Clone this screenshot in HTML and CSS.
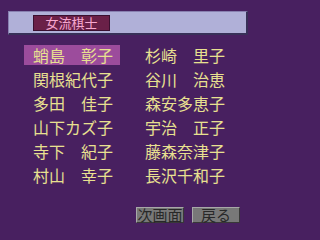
FILE: index.html
```html
<!DOCTYPE html>
<html lang="ja">
<head>
<meta charset="utf-8">
<link rel="stylesheet" href="styles.css">
</head>
<body>
<div class="screen">
  <div class="header">
    <div class="title">女流棋士</div>
  </div>
  <div class="list">
    <div class="name sel">蛸島　彰子</div>
    <div class="name">杉崎　里子</div>
    <div class="name">関根紀代子</div>
    <div class="name">谷川　治恵</div>
    <div class="name">多田　佳子</div>
    <div class="name">森安多恵子</div>
    <div class="name">山下カズ子</div>
    <div class="name">宇治　正子</div>
    <div class="name">寺下　紀子</div>
    <div class="name">藤森奈津子</div>
    <div class="name">村山　幸子</div>
    <div class="name">長沢千和子</div>
  </div>
  <div class="buttons">
    <div class="btn">次画面</div>
    <div class="btn">戻る</div>
  </div>
</div>
</body>
</html>
```
FILE: styles.css
```css
html, body {
  margin: 0;
  padding: 0;
  background: #482060;
}
.screen {
  width: 256px;
  height: 232px;
  overflow: hidden;
  background: #482060;
  font-family: "Noto Sans CJK JP", "Noto Sans", sans-serif;
  padding-top: 11px;
  box-sizing: border-box;
}
.header {
  margin: 0 8px;
  height: 24px;
  box-sizing: border-box;
  background: #b0b0d8;
  border-top: 1px solid #8880b0;
  border-left: 1px solid #8880b0;
  border-right: 2px solid #383058;
  border-bottom: 2px solid #383058;
  padding: 3px 0 0 24px;
}
.title {
  width: 77px;
  height: 16px;
  box-sizing: border-box;
  background: #6a2048;
  border: 1px solid #3a1030;
  color: #f8a8d0;
  font-size: 13px;
  line-height: 14px;
  text-align: center;
}
.list {
  display: grid;
  grid-template-columns: 96px 96px;
  column-gap: 16px;
  row-gap: 4px;
  margin: 10px 0 0 24px;
}
.name {
  height: 20px;
  box-sizing: border-box;
  padding: 2px 0 0 9px;
  font-size: 16px;
  line-height: 16px;
  color: #e8e090;
  white-space: pre;
}
.name.sel {
  background: #9c4c9c;
}
.buttons {
  display: flex;
  gap: 8px;
  margin: 22px 0 0 136px;
}
.btn {
  width: 48px;
  height: 16px;
  box-sizing: border-box;
  background: #787878;
  border-top: 1px solid #a8a8a8;
  border-left: 1px solid #a8a8a8;
  border-right: 1px solid #383838;
  border-bottom: 1px solid #383838;
  color: #282828;
  font-size: 15px;
  line-height: 14px;
  text-align: center;
  white-space: nowrap;
}
```
